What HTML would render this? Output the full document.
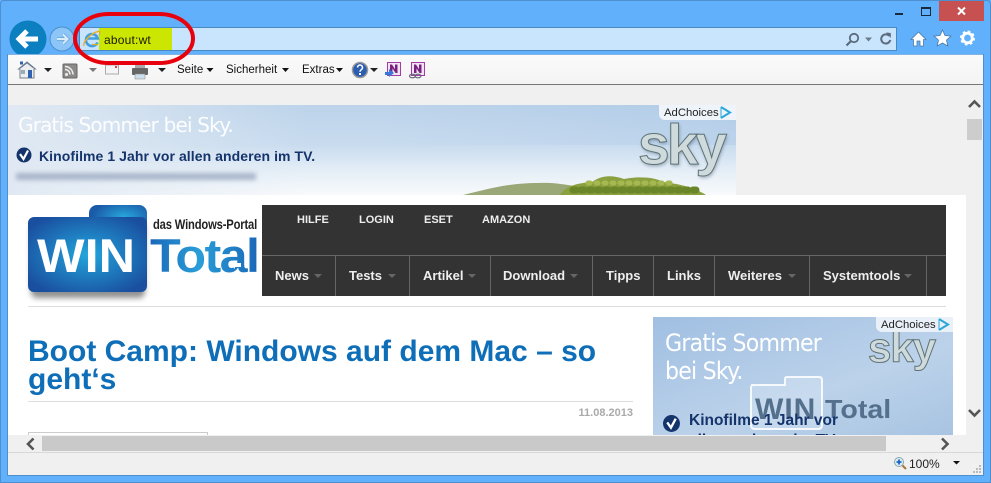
<!DOCTYPE html>
<html><head><meta charset="utf-8"><style>
html,body{margin:0;padding:0;background:#fff}
body{width:991px;height:483px;overflow:hidden;position:relative;font-family:"Liberation Sans",sans-serif}
.a{position:absolute}
.t{position:absolute;white-space:nowrap}
.nav{position:absolute;top:265px;font:bold 13px/22px "Liberation Sans",sans-serif;color:#eee;white-space:nowrap}
.top{position:absolute;top:213px;font:bold 11px/14px "Liberation Sans",sans-serif;color:#eee;white-space:nowrap}
.sep{position:absolute;top:256px;width:1px;height:40px;background:#666}
.tb{position:absolute;top:63px;font:11.5px/14px "Liberation Sans",sans-serif;color:#111;white-space:nowrap}
</style></head><body>
<div class="a" style="left:0;top:0;width:991px;height:483px;background:#60b0fc"></div>
<div class="a" style="left:0;top:0;width:989px;height:481px;border:1px solid #4e8fd0;border-radius:4px 4px 0 0"></div>
<!-- window buttons -->
<div class="a" style="left:895px;top:13px;width:8px;height:2px;background:#1a2a3a"></div>
<div class="a" style="left:921px;top:7px;width:8px;height:6px;border:1px solid #1a2a3a;border-top-width:2px"></div>
<div class="a" style="left:939px;top:1px;width:45px;height:20px;background:#c75050"></div>
<svg class="a" style="left:956px;top:6px" width="11" height="10"><path d="M2 1.500L9 8.500M9 1.500L2 8.500" stroke="#fff" stroke-width="2"/></svg>
<!-- address bar -->
<div class="a" style="left:79px;top:27px;width:816px;height:22px;background:#c9e4fd;border:1px solid #4a88c0"></div>
<div class="a" style="left:99px;top:28px;width:73px;height:22px;background:#cbe600"></div>
<div class="t" style="left:104px;top:33px;font:12px/14px 'Liberation Sans',sans-serif;letter-spacing:.2px;color:#1a1a00">about:wt</div>
<svg class="a" style="left:83px;top:30px" width="18" height="18" viewBox="0 0 18 18"><path d="M14.500 12.500A6 6 0 1 1 14.800 8.500H4.500" fill="none" stroke="#3f9ee4" stroke-width="2.600"/><path d="M1 16C-.5 12 8 3 15.500 1.300 17.500 1.200 17 3.500 16 5.500" fill="none" stroke="#e8b020" stroke-width="1.400"/><path d="M9 14.500h6" stroke="#e8b020" stroke-width="1.300"/></svg>
<svg class="a" style="left:845px;top:31px" width="50" height="16" viewBox="0 0 50 16"><circle cx="9" cy="7" r="4.200" fill="none" stroke="#5c6c7c" stroke-width="1.800"/><path d="M6 10L1.500 14.500" stroke="#5c6c7c" stroke-width="2.200"/><path d="M20 6.500h7l-3.500 4z" fill="#6c7c8c"/><path d="M44.200 4.800A4.600 4.600 0 1 0 45.300 9" fill="none" stroke="#5c6c7c" stroke-width="2"/><path d="M41 1.500l4.800 .5V7z" fill="#5c6c7c"/></svg>
<!-- back / forward -->
<svg class="a" style="left:8px;top:19px" width="72" height="40" viewBox="0 0 72 40"><circle cx="20" cy="20" r="18.500" fill="#0b7fc0"/><path d="M30 20H12M19 12L11 20l8 8" fill="none" stroke="#fff" stroke-width="5"/><circle cx="54" cy="20" r="12" fill="#8cc6f8" stroke="#4f8fc6"/><path d="M49 20h10M55 15.500l4.500 4.500-4.500 4.500" fill="none" stroke="#6ea6d4" stroke-width="3.600"/><path d="M49 20h10M55 15.500l4.500 4.500-4.500 4.500" fill="none" stroke="#d8ecfd" stroke-width="2"/></svg>
<!-- right icons -->
<svg class="a" style="left:908px;top:28px" width="70" height="20" viewBox="0 0 70 20"><path d="M10.500 4L3 11.500H5.500V18H9V13H12V18H15.500V11.500H18Z" fill="#fff" stroke="#4d7aa5" stroke-width=".8"/><path d="M34.500 2l2.500 5.500 6 .6-4.500 4 1.300 5.900-5.300-3-5.300 3 1.300-5.900-4.500-4 6-.6z" fill="#fff" stroke="#4d7aa5" stroke-width=".8"/><circle cx="59.500" cy="10" r="4.800" fill="none" stroke="#fff" stroke-width="2.800"/><circle cx="59.500" cy="10" r="6.300" fill="none" stroke="#fff" stroke-width="2.400" stroke-dasharray="2.470 2.480"/></svg>
<!-- toolbar -->
<div class="a" style="left:8px;top:54px;width:975px;height:30px;background:linear-gradient(#fafafa,#f4f4f4)"></div>
<div class="a" style="left:8px;top:54px;width:975px;height:1px;background:#7fb4e4"></div>
<div class="a" style="left:8px;top:84px;width:975px;height:1px;background:#767676"></div>
<div class="a" style="left:7px;top:54px;width:1px;height:422px;background:#4e8fd0"></div>
<div class="a" style="left:983px;top:54px;width:1px;height:422px;background:#4e8fd0"></div>
<div class="a" style="left:7px;top:475px;width:977px;height:1px;background:#4e8fd0"></div>
<svg class="a" style="left:8px;top:55px" width="430" height="29" viewBox="0 0 430 29">
<path d="M10.500 14L19 7l8.500 7h-1.500v9H12v-9z" fill="#eceef0" stroke="#7a8088"/><rect x="12" y="6.500" width="3" height="3" fill="#2f62b0"/><path d="M19 6.500L12 12.500l1 .6L19 8.500l6 4.600 1-.6z" fill="#6a7c98"/><rect x="20" y="15" width="4" height="8" fill="#2f62b0"/><rect x="13" y="15" width="4" height="4" fill="#9ab"/>
<path d="M36 13h8l-4 4z" fill="#222"/>
<rect x="55" y="9" width="14" height="14" rx="1" fill="#8c8a88" stroke="#666"/><circle cx="58.500" cy="19.500" r="1.500" fill="#eee"/><path d="M57 14.500a5 5 0 0 1 5 5M57 11.500a8 8 0 0 1 8 8" stroke="#eee" stroke-width="1.500" fill="none"/>
<path d="M81 13h8l-4 4z" fill="#777"/>
<rect x="97.500" y="10" width="13" height="9" fill="#f5f5f5" stroke="#aaa"/><rect x="107" y="11" width="2" height="2" fill="#c44"/>
<rect x="124" y="13" width="16" height="7" rx="1" fill="#666"/><rect x="127" y="10" width="10" height="3" fill="#aaa"/><rect x="127" y="19" width="10" height="5" fill="#cde" stroke="#888" stroke-width=".5"/>
<path d="M150 13h8l-4 4z" fill="#222"/>
<circle cx="352" cy="15" r="7.500" fill="#2a5cb0" stroke="#999" stroke-width="1.500"/><path d="M349.500 12.500a2.500 2.500 0 1 1 4 2c-1 .8-1.500 1-1.500 2.200" fill="none" stroke="#fff" stroke-width="1.500"/><rect x="351" y="18" width="2" height="2" fill="#fff"/>
<path d="M362 13h8l-4 4z" fill="#222"/>
<rect x="379.500" y="7.500" width="13" height="13" fill="#f0e4f2" stroke="#a33aa8"/><path d="M382 18V9.500h2l3 4.800V9.500h2.500V18h-2l-3-4.800V18z" fill="#7a2080"/><path d="M377 17h4v-3l5 4-5 4v-2h-4z" fill="#3a78d8"/>
<rect x="403.500" y="7.500" width="13" height="13" fill="#f0e4f2" stroke="#a33aa8"/><path d="M406 18V9.500h2l3 4.800V9.500h2.500V18h-2l-3-4.800V18z" fill="#7a2080"/><ellipse cx="404.500" cy="21" rx="3" ry="1.800" fill="none" stroke="#667" stroke-width="1.100"/><ellipse cx="410" cy="21" rx="3" ry="1.800" fill="none" stroke="#667" stroke-width="1.100"/>
<path d="M198.500 13h7l-3.500 4z" fill="#111"/><path d="M274 13h7l-3.500 4z" fill="#111"/><path d="M328 13h7l-3.500 4z" fill="#111"/>
</svg>
<div class="tb" style="left:177px">Seite</div>
<div class="tb" style="left:226px">Sicherheit</div>
<div class="tb" style="left:302px">Extras</div>
<!-- content bg -->
<div class="a" style="left:8px;top:85px;width:975px;height:367px;background:#f0f0f0"></div>
<!-- ad -->
<div class="a" style="left:8px;top:105px;width:728px;height:90px;overflow:hidden;background:linear-gradient(#bcd3ea 0%,#c9dcef 45%,#e6eff7 75%,#f8fafc 100%)">
 <div class="a" style="left:0;top:0;width:300px;height:90px;background:linear-gradient(90deg,#e0e9f3,rgba(220,230,240,0))"></div>
 <div class="a" style="left:0;top:0;width:728px;height:40px;background:linear-gradient(90deg,rgba(0,0,0,0) 50%,rgba(150,185,225,.25) 100%)"></div>
 <div class="a" style="left:8px;top:68px;width:240px;height:7px;background:#9aa8c0;filter:blur(2.500px);opacity:.8"></div>
 <svg class="a" style="left:0;top:0" width="728" height="90" viewBox="0 0 728 90"><path d="M455 90C480 84 500 78 530 78c20-1 30 3 50 4v8z" fill="#9aa878"/><path d="M552 90c5-9 18-12 32-13 10-7 20-7 32-3 15-3 30-2 40 3 14 2 30 5 42 13z" fill="#8ba03e"/><path d="M565 85h125" stroke="#6b8628" stroke-width="7" stroke-dasharray="3 5" stroke-linecap="round"/><path d="M580 78h85" stroke="#a6b850" stroke-width="5" stroke-dasharray="2 6" stroke-linecap="round"/></svg>
 <div class="t" style="left:10px;top:7px;font:20px/26px 'DejaVu Sans',sans-serif;letter-spacing:-.81px;color:#fff;opacity:.95">Gratis Sommer bei Sky.</div>
 <svg class="a" style="left:8px;top:42px" width="17" height="17" viewBox="0 0 17 17"><circle cx="8" cy="8" r="7.500" fill="#15346c"/><path d="M4 7l3.500 5L12 3.500" fill="none" stroke="#fff" stroke-width="2.200"/></svg>
 <div class="t" style="left:31px;top:42px;font:bold 14px/18px 'Liberation Sans',sans-serif;color:#15346c;letter-spacing:.07px">Kinofilme 1 Jahr vor allen anderen im TV.</div>
 <div class="t" style="left:630px;top:10px;font:bold 57px/60px 'Liberation Sans',sans-serif;letter-spacing:-3px;color:#cfdadc;-webkit-text-stroke:1px #5f7377;text-shadow:1px 2px 3px rgba(60,80,100,.4)">sky</div>
 <div class="a" style="left:651px;top:0;width:77px;height:15px;background:#eef4fa;border-radius:0 0 0 6px"></div>
 <div class="t" style="left:656px;top:1px;font:11.3px/14px 'Liberation Sans',sans-serif;color:#222">AdChoices</div>
 <svg class="a" style="left:711px;top:1px" width="14" height="14"><path d="M2 1l9 5.500L2 12" fill="none" stroke="#2aa8d8" stroke-width="2"/><path d="M2 1v11" stroke="#2aa8d8" stroke-width="1"/></svg>
</div>
<!-- page -->
<div class="a" style="left:8px;top:195px;width:958px;height:240px;background:#fff;overflow:hidden"></div>
<!-- logo -->
<svg class="a" style="left:24px;top:203px" width="130" height="100" viewBox="0 0 130 100">
<defs><radialGradient id="g" cx="50%" cy="50%" r="60%"><stop offset="0" stop-color="#22a6dc"/><stop offset="1" stop-color="#1a4fa0"/></radialGradient><radialGradient id="g2" cx="60%" cy="40%" r="55%"><stop offset="0" stop-color="#28a8dc"/><stop offset="1" stop-color="#1a5aa8"/></radialGradient><filter id="b"><feGaussianBlur stdDeviation="3"/></filter></defs>
<rect x="7" y="20" width="114" height="75" rx="6" fill="#555" opacity=".65" filter="url(#b)"/>
<rect x="65" y="2" width="58" height="30" rx="8" fill="url(#g2)"/>
<rect x="4" y="14" width="119" height="75" rx="6" fill="url(#g)"/>
<text x="13" y="69" font-family="Liberation Sans" font-weight="bold" font-size="47" fill="#fff" textLength="98" lengthAdjust="spacingAndGlyphs">WIN</text>
</svg>
<div class="t" style="left:153px;top:216px;font:bold 14px/16px 'Liberation Sans',sans-serif;color:#222;transform:scaleX(.8);transform-origin:0 0;letter-spacing:-.2px">das Windows-Portal</div>
<div class="t" style="left:150px;top:231px;font:bold 47px/50px 'Liberation Sans',sans-serif;letter-spacing:-1.500px;transform:scaleX(1.07);transform-origin:0 0;color:transparent;background:linear-gradient(90deg,#1a68b8,#2a9ed8 45%,#1a68b8);-webkit-background-clip:text;background-clip:text">Total</div>
<svg class="a" style="left:231px;top:261px" width="10" height="8"><path d="M0 4l4-4v2h6v4H4v2z" fill="#fff"/></svg>
<!-- nav -->
<div class="a" style="left:262px;top:205px;width:684px;height:91px;background:#333"></div>
<div class="a" style="left:262px;top:255px;width:684px;height:1px;background:#666"></div>
<div class="top" style="left:297px">HILFE</div>
<div class="top" style="left:359px">LOGIN</div>
<div class="top" style="left:424px">ESET</div>
<div class="top" style="left:482px">AMAZON</div>
<div class="nav" style="left:275px">News</div>
<div class="nav" style="left:349px">Tests</div>
<div class="nav" style="left:423px">Artikel</div>
<div class="nav" style="left:503px">Download</div>
<div class="nav" style="left:606px">Tipps</div>
<div class="nav" style="left:667px">Links</div>
<div class="nav" style="left:728px">Weiteres</div>
<div class="nav" style="left:823px">Systemtools</div>
<div class="sep" style="left:335px"></div><div class="sep" style="left:409px"></div><div class="sep" style="left:490px"></div><div class="sep" style="left:592px"></div><div class="sep" style="left:653px"></div><div class="sep" style="left:714px"></div><div class="sep" style="left:809px"></div><div class="sep" style="left:926px"></div>
<svg class="a" style="left:262px;top:271px" width="660" height="10"><g fill="#666"><path d="M52 3h8l-4 4zM126 3h8l-4 4zM206 3h8l-4 4zM308 3h8l-4 4zM526 3h8l-4 4zM642 3h8l-4 4z"/></g></svg>
<div class="a" style="left:28px;top:306px;width:918px;height:1px;background:#ddd"></div>
<!-- title -->
<div class="t" style="left:28px;top:338px;font:bold 30px/28px 'Liberation Sans',sans-serif;color:#0e6eb8">Boot Camp: Windows auf dem Mac – so<br>geht‘s</div>
<div class="a" style="left:28px;top:401px;width:605px;height:1px;background:#ddd"></div>
<div class="t" style="right:358px;top:406px;font:bold 11px/14px 'Liberation Sans',sans-serif;color:#aaa">11.08.2013</div>
<div class="a" style="left:28px;top:432px;width:178px;height:3px;border:1px solid #ccc;border-bottom:0"></div>
<!-- side ad -->
<div class="a" style="left:653px;top:317px;width:300px;height:118px;overflow:hidden;background:linear-gradient(160deg,#a0bfe2,#bcd2ea 60%,#a8c4e2)">
 <div class="t" style="left:12px;top:12px;font:24px/28px 'DejaVu Sans',sans-serif;letter-spacing:-.85px;color:#fff;transform:scaleX(.92);transform-origin:0 0">Gratis Sommer<br>bei Sky.</div>
 <div class="t" style="left:215px;top:11px;font:bold 42px/40px 'Liberation Sans',sans-serif;letter-spacing:-1px;color:#cfdadc;-webkit-text-stroke:1px #5f7377">sky</div>
 <div class="a" style="left:223px;top:0;width:77px;height:15px;background:#e9f0f8;border-radius:0 0 0 6px"></div>
 <div class="t" style="left:228px;top:1px;font:11.3px/14px 'Liberation Sans',sans-serif;color:#222">AdChoices</div>
 <svg class="a" style="left:284px;top:1px" width="14" height="14"><path d="M2 1l9 5.500L2 12" fill="none" stroke="#2aa8d8" stroke-width="2"/><path d="M2 1v11" stroke="#2aa8d8"/></svg>
 <svg class="a" style="left:96px;top:58px" width="80" height="60" viewBox="0 0 80 60"><path d="M3 10H36V4Q36 2 38 2H70Q73 2 73 5V50Q73 54 69 54H6Q2 54 2 50V12Z" fill="rgba(235,243,252,.25)" stroke="rgba(255,255,255,.85)" stroke-width="2"/></svg>
 <div class="t" style="left:102px;top:78px;font:bold 30px/30px 'Liberation Sans',sans-serif;color:#54708c;letter-spacing:1px">WIN</div>
 <div class="t" style="left:172px;top:77px;font:bold 26px/30px 'Liberation Sans',sans-serif;color:#54708c;transform:scaleX(1.1);transform-origin:0 0">Total</div>
 <svg class="a" style="left:10px;top:98px" width="18" height="18" viewBox="0 0 17 17"><circle cx="8" cy="8" r="8" fill="#15346c"/><path d="M4 7l3.500 5L12 3.500" fill="none" stroke="#fff" stroke-width="2.200"/></svg>
 <div class="t" style="left:36px;top:94px;font:bold 15.5px/20px 'Liberation Sans',sans-serif;color:#15346c">Kinofilme 1 Jahr vor<br>allen anderen im TV.</div>
</div>
<!-- scrollbars -->
<div class="a" style="left:967px;top:119px;width:15px;height:21px;background:#cdcdcd"></div>
<svg class="a" style="left:966px;top:98px" width="17" height="14"><path d="M3 9l5.500-5.500L14 9" fill="none" stroke="#555" stroke-width="2.600"/></svg>
<svg class="a" style="left:966px;top:406px" width="17" height="14"><path d="M3 4l5.500 5.500L14 4" fill="none" stroke="#555" stroke-width="2.600"/></svg>
<div class="a" style="left:8px;top:435px;width:958px;height:17px;background:#f0f0f0"></div>
<div class="a" style="left:42px;top:436px;width:844px;height:15px;background:#c9c9c9"></div>
<svg class="a" style="left:24px;top:436px" width="14" height="16"><path d="M9.500 2.500L4 8l5.500 5.500" fill="none" stroke="#555" stroke-width="2.600"/></svg>
<svg class="a" style="left:938px;top:436px" width="14" height="16"><path d="M4 2.500L9.500 8 4 13.500" fill="none" stroke="#555" stroke-width="2.600"/></svg>
<!-- status -->
<div class="a" style="left:8px;top:452px;width:975px;height:1px;background:#d8d8d8"></div>
<div class="a" style="left:8px;top:453px;width:975px;height:22px;background:#f0f0f0"></div>
<svg class="a" style="left:893px;top:456px" width="14" height="15"><circle cx="6" cy="6" r="4.500" fill="#dceaf8" stroke="#8aa"/><path d="M3.500 6h5M6 3.500v5" stroke="#1c66c0" stroke-width="1.800"/><path d="M9.500 9.500l3.500 3.500" stroke="#a87838" stroke-width="2"/></svg>
<div class="t" style="left:909px;top:457px;font:12px/14px 'Liberation Sans',sans-serif;color:#222">100%</div>
<svg class="a" style="left:952px;top:460px" width="10" height="6"><path d="M1 1h7l-3.500 3.500z" fill="#111"/></svg>
<svg class="a" style="left:972px;top:464px" width="10" height="10"><g fill="#bbb"><rect x="7" y="1" width="2" height="2"/><rect x="4" y="4" width="2" height="2"/><rect x="7" y="4" width="2" height="2"/><rect x="1" y="7" width="2" height="2"/><rect x="4" y="7" width="2" height="2"/><rect x="7" y="7" width="2" height="2"/></g></svg>
<!-- red ellipse -->
<svg class="a" style="left:0;top:0" width="240" height="90"><rect x="75" y="14" width="118" height="49" rx="34" ry="24.500" fill="none" stroke="#e8000c" stroke-width="4"/></svg>
</body></html>
